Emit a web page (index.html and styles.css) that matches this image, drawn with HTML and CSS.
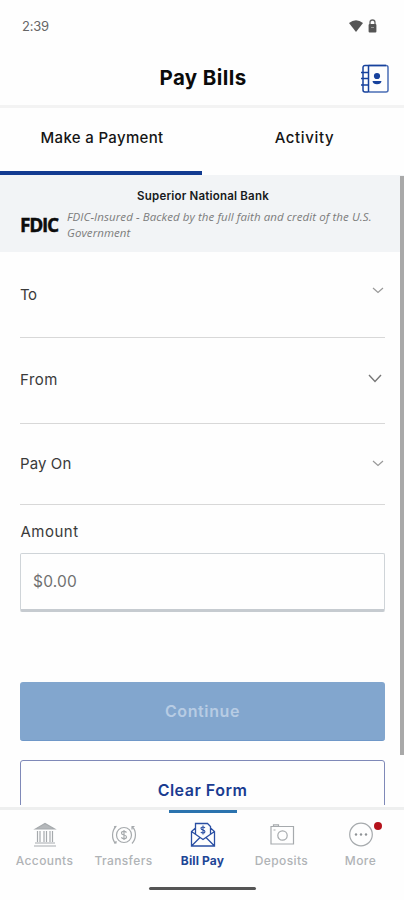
FILE: index.html
```html
<!DOCTYPE html>
<html lang="en">
<head>
<meta charset="utf-8">
<title>Pay Bills</title>
<link rel="stylesheet" href="styles.css">
</head>
<body>
<div class="phone">
  <div class="status">
    <span class="time">2:39</span>
    <span class="status-icons">
      <svg width="16" height="14" viewBox="0 0 16 14"><path d="M1 4Q8-1.500 15 4L8 13Z" fill="#555"/></svg>
      <svg width="9" height="14" viewBox="0 0 9 14"><path d="M2 6V3.500a2.500 2.500 0 0 1 5 0V6" fill="none" stroke="#666" stroke-width="1.300"/><rect x=".6" y="5" width="7.800" height="8.500" rx="1" fill="#555"/><path d="M3 8.500h3" stroke="#999"/></svg>
    </span>
  </div>
  <header class="header">
    <h1 class="title">Pay Bills</h1>
    <svg class="book" width="30" height="30" viewBox="0 0 30 30" fill="none" stroke="#17429d" stroke-width="1.500"><path d="M8.500 1.500H26a2 2 0 0 1 2 2V26a2 2 0 0 1-2 2H8.500" stroke="#4a6db5"/><path d="M5 1.500H26M8.500 1.500V28M5 28a2 2 0 0 1-2-2V3.500a2 2 0 0 1 2-2M5 28h3.500M1 8.500h7.500M1 14.500h7.500M1 21h7.500"/><circle cx="17" cy="12" r="3.100" fill="#17429d" stroke="none"/><path d="M12.500 17h9q-.5 3.300-4.500 3.300T12.500 17z" fill="#17429d" stroke="none"/></svg>
  </header>
  <nav class="tabs">
    <a class="tab tab-active"><span>Make a Payment</span></a>
    <a class="tab"><span>Activity</span></a>
  </nav>
  <main class="content">
    <section class="fdic">
      <div class="bank">Superior National Bank</div>
      <div class="fdic-row">
        <span class="fdic-logo">FDIC</span>
        <p class="fdic-text">FDIC-Insured - Backed by the full faith and credit of the U.S.<br>Government</p>
      </div>
    </section>
    <form class="form">
      <div class="field to"><span>To</span><svg class="chev" width="12" height="7" viewBox="0 0 12 7"><path d="M1 1l5 4.500L11 1"/></svg></div>
      <div class="field from"><span>From</span><svg class="chev chev-dark" width="14" height="9" viewBox="0 0 14 9"><path d="M1 1l6 6.500L13 1"/></svg></div>
      <div class="field payon"><span>Pay On</span><svg class="chev" width="12" height="7" viewBox="0 0 12 7"><path d="M1 1l5 4.500L11 1"/></svg></div>
      <div class="amount-label">Amount</div>
      <div class="amount">$0.00</div>
      <div class="btn btn-primary">Continue</div>
      <div class="btn btn-outline">Clear Form</div>
    </form>
    <div class="scrollbar"></div>
  </main>
  <nav class="bottom">
    <a class="item"><svg width="24" height="26" viewBox="0 0 24 26" fill="none" stroke="#a6aaad" stroke-width="1.200"><path d="M2.500 7L12 1.500 21.500 7z" fill="#b5b8bb"/><path d="M4.500 9v11M7 9v11M11 9v11M13.500 9v11M17 9v11M19.500 9v11M2 21h20M1 24h22"/></svg><span>Accounts</span></a>
    <a class="item"><svg width="26" height="26" viewBox="0 0 26 26" fill="none" stroke="#a6aaad" stroke-width="1.200"><circle cx="13" cy="13" r="7.500"/><path d="M15.500 10.500q-1-1.200-2.500-1.200c-3.500 0-3.200 3.200 0 3.700s3.500 3.700 0 3.700q-1.700 0-2.700-1.300M13 8v10M5 4.500C.5 9 .5 17 4.500 21.500M3 4.800l2.500-.5M21 21.500C25.500 17 25.500 9 21.500 5M20.500 4.500h3M21 4.500v3M3 21h2v-2"/></svg><span>Transfers</span></a>
    <a class="item item-active"><svg width="26" height="26" viewBox="0 0 26 26" fill="none" stroke="#2a4fa3" stroke-width="1.300"><path d="M5.500 12.500V1.500h12l3 3v8M5.500 6L1.500 9.500V24h23V9.500L20.500 6M1.500 9.500L13 17.500 24.500 9.500M1.500 24L10 15.500M24.500 24L16 15.500"/><path stroke-width="1.100" d="M15 6q-.8-1-2-1c-2.800 0-2.600 2.500 0 3s2.600 3 0 3q-1.400 0-2.200-1M13 3.500v9"/></svg><span>Bill Pay</span></a>
    <a class="item"><svg width="26" height="26" viewBox="0 0 26 26" fill="none" stroke="#a6aaad" stroke-width="1.200"><path d="M2 4.500h22.500v17.500H2zM4.500 4.500V2.800h5v1.700M4.500 8h2"/><circle cx="13.500" cy="13.500" r="4.700"/></svg><span>Deposits</span></a>
    <a class="item"><svg width="26" height="26" viewBox="0 0 26 26" fill="none" stroke="#a6aaad" stroke-width="1.200"><circle cx="13" cy="12.500" r="11.300"/><g fill="#8f9396" stroke="none"><circle cx="8" cy="12.500" r="1.200"/><circle cx="13" cy="12.500" r="1.200"/><circle cx="18" cy="12.500" r="1.200"/></g></svg><span>More</span><i class="dot"></i></a>
  </nav>
  <div class="home"></div>
</div>
</body>
</html>
```
FILE: styles.css
```css
* { box-sizing: border-box; }
body { margin: 0; background: #fff; font-family: Inter, Roboto, sans-serif; color: #222; }
span { white-space: nowrap; }
.phone { width: 404px; height: 900px; overflow: hidden; display: flex; flex-direction: column; background: #fefefe; }
.status { height: 52px; display: flex; justify-content: space-between; align-items: center; padding: 0 27px 0 22px; flex: none; }
.time { font-size: 13px; color: #666; letter-spacing: -.2px; }
.status-icons { display: flex; gap: 4px; align-items: center; }
.header { height: 53px; flex: none; position: relative; display: flex; justify-content: center; align-items: center; padding: 0 0 2px 2px; }
.title { margin: 0; font-size: 20.500px; font-weight: 650; letter-spacing: .4px; color: #0b0b0b; }
.book { position: absolute; right: 14px; top: 12px; }
.tabs { height: 70px; flex: none; display: grid; grid-template-columns: 1fr 1fr; border-top: 3px solid #f3f3f3; }
.tab { display: flex; justify-content: center; align-items: center; padding: 0 0 4px 2px; font-size: 15px; font-weight: 540; letter-spacing: .33px; color: #151515; border-bottom: 4px solid transparent; }
.tab + .tab { letter-spacing: .65px; padding-left: 3px; }
.tab-active { border-bottom-color: #123b91; }
.content { height: 630px; margin-bottom: 2px; flex: none; position: relative; overflow: hidden; }
.fdic { height: 77px; background: #f2f4f6; padding: 13px 20px 0; }
.bank { text-align: center; font-size: 11.500px; line-height: 16px; font-weight: 600; letter-spacing: .2px; color: #171a20; padding-left: 2px; }
.fdic-row { display: flex; align-items: center; gap: 9px; margin-top: 5px; }
.fdic-logo { width: 38px; font: 700 19px/32px "Open Sans", sans-serif; letter-spacing: -1.300px; color: #0c0c0c; -webkit-text-stroke: .4px #0c0c0c; }
.fdic-text { margin: 0; font: italic 11.500px/16px "Open Sans", sans-serif; letter-spacing: .08px; color: #7c7c7c; white-space: nowrap; }
.form { padding: 0 19px 0 20px; display: flex; flex-direction: column; }
.field { display: flex; justify-content: space-between; align-items: center; border-bottom: 1.500px solid #d8d8d8; font-size: 15px; letter-spacing: .1px; color: #3a3a3a; padding-right: 1px; }
.to { height: 86px; padding-bottom: 1px; letter-spacing: -.4px; }
.from { height: 86px; padding-bottom: 3px; letter-spacing: .5px; }
.payon { height: 81px; padding-bottom: 2px; }
.chev { fill: none; stroke: #999; stroke-width: 1.200; }
.chev-dark { stroke: #777; stroke-width: 1.400; margin: 0 2px 2px 0; }
.to .chev { margin-bottom: 7px; }
.amount-label { font-size: 15px; line-height: 20px; margin-top: 17px; letter-spacing: .5px; color: #3a3a3a; padding-left: .5px; }
.amount { height: 59px; margin-top: 11px; border: 1px solid #cfd4d8; border-bottom: 3px solid #c6cbd0; border-radius: 2px; padding-left: 12px; line-height: 56px; font-size: 15.500px; letter-spacing: .2px; color: #707070; }
.btn { height: 59px; line-height: 59px; text-align: center; border-radius: 3px; font-size: 16px; font-weight: 600; letter-spacing: .5px; }
.btn-primary { margin-top: 70px; background: #82a6ce; color: #b7cce4; border-bottom: 1px solid #6f98c8; letter-spacing: .6px; }
.btn-outline { margin-top: 19px; border: 1px solid #7f89b8; color: #1a3b91; }
.scrollbar { position: absolute; right: 0; top: 1px; width: 4px; height: 579px; background: #a9a9a9; }
.bottom { height: 64px; flex: none; display: grid; grid-template-columns: 84px 74px 84px 74px 84px; padding-left: 3px; border-top: 3px solid #eeefef; }
.item { position: relative; display: flex; flex-direction: column; align-items: center; padding: 12px 1px 0 0; gap: 6px; font-size: 12px; line-height: 14px; font-weight: 500; letter-spacing: .4px; color: #b0b3b6; }
.item-active { color: #1e4696; font-weight: 650; letter-spacing: .15px; }
.item-active::before { content: ""; position: absolute; left: 8px; top: 0; width: 68px; height: 3px; background: #2b73ae; }
.dot { position: absolute; left: 55px; top: 12px; width: 8px; height: 8px; border-radius: 50%; background: #b5121b; }
.home { width: 107px; height: 3px; margin: 16px 0 0 149px; border-radius: 2px; background: #555; flex: none; }
```
